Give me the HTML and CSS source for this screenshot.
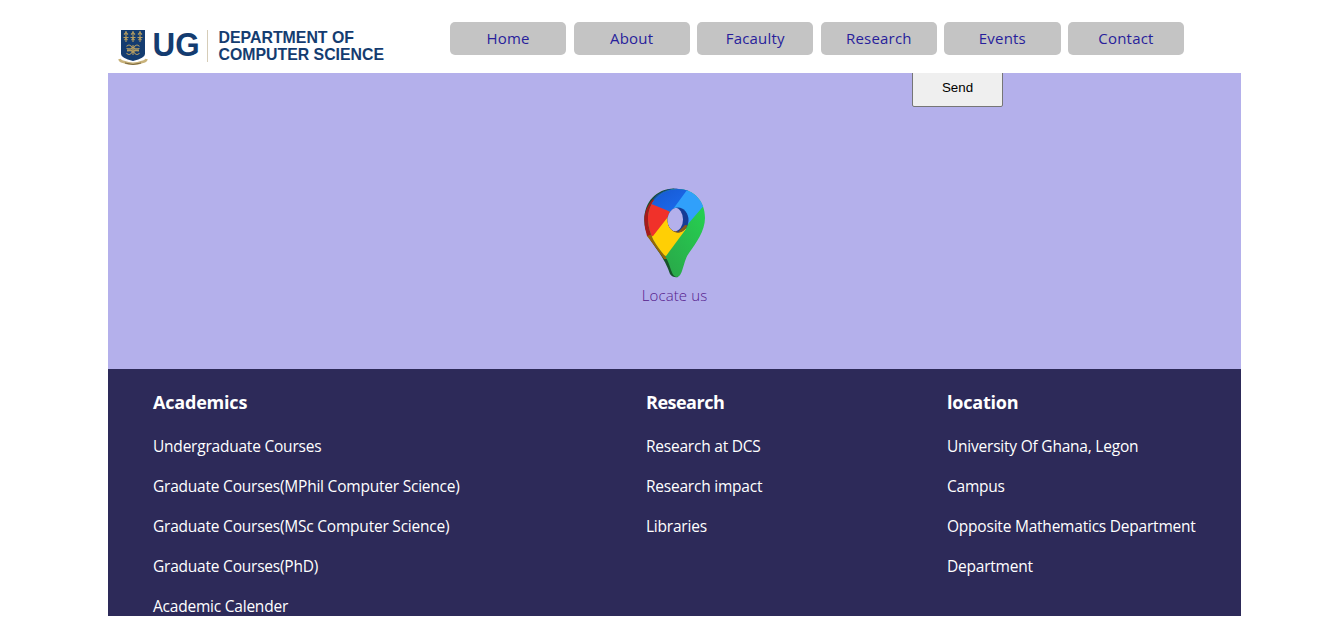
FILE: index.html
```html
<!DOCTYPE html>
<html lang="en">
<head>
<meta charset="utf-8">
<title>Department of Computer Science</title>
<link rel="stylesheet" href="styles.css">
</head>
<body>
<div class="page">
  <header class="header">
    <svg class="logo" width="284" height="44" viewBox="0 0 284 44" role="img">
      <path d="M13 7H37V31Q37 35 25 38Q13 35 13 31Z" fill="#143c70"/>
      <g stroke="#b59d61" stroke-width="1.1" fill="none">
        <path d="M18 8V19M25 8V19M32 8V19M15.500 14.500H20.500M22.500 14.500H27.500M29.500 14.500H34.500"/>
        <path d="M16 11.500L18 9.500L20 11.500M23 11.500L25 9.500L27 11.500M30 11.500L32 9.500L34 11.500M16.500 17L18 15.500L19.500 17M23.500 17L25 15.500L26.500 17M30.500 17L32 15.500L33.500 17"/>
        <path d="M18.500 23.500Q21 20.500 23.500 23.500T18.500 25.500M31.500 23.500Q29 20.500 26.500 23.500T31.500 25.500M18.500 30Q21 33 23.500 30T19 28M31.500 30Q29 33 26.500 30T31 28M25 22V32M19 27H31"/>
      </g>
      <path d="M11.500 36Q12 38.500 16 39Q25 42.500 34 39Q38 38.500 38.500 36" fill="none" stroke="#c8b27a" stroke-width="2.600"/>
      <path d="M17 40Q25 43 33 40" fill="none" stroke="#7a6840" stroke-width="1"/>
      <text class="logo-mark" x="44.500" y="32.500" textLength="47" lengthAdjust="spacingAndGlyphs">UG</text>
      <path d="M99.500 7V39" stroke="#d6cdb8" stroke-width="1"/>
      <text class="logo-name" x="110.500" y="19.800" textLength="135.500" lengthAdjust="spacingAndGlyphs">DEPARTMENT OF</text>
      <text class="logo-name" x="110.500" y="37" textLength="165.500" lengthAdjust="spacingAndGlyphs">COMPUTER SCIENCE</text>
    </svg>
    <nav class="nav">
      <a>Home</a><a>About</a><a>Facaulty</a><a>Research</a><a>Events</a><a>Contact</a>
    </nav>
  </header>
  <main class="contact">
    <button class="send">Send</button>
    <a class="locate">
      <svg class="pin" width="62" height="90" viewBox="0 0 62 90">
        <defs>
          <clipPath id="face"><path d="M34 1C50 1 61 13 61 30C61 43 52 55 45 65C39 73 39 89 33 89C27 89 27 77 21 68C12 57 5 48 4 32C4 13 17 1 34 1Z"/></clipPath>
          <clipPath id="hole"><ellipse cx="34" cy="32" rx="10.500" ry="12.500"/></clipPath>
          <linearGradient id="green" x1="1" y1="0" x2="0" y2="1"><stop offset="0" stop-color="#25d852"/><stop offset="1" stop-color="#2b9b47"/></linearGradient>
          <linearGradient id="blue" x1="0" y1="0" x2="1" y2="1"><stop offset="0" stop-color="#1757cf"/><stop offset="1" stop-color="#1c6df0"/></linearGradient>
        </defs>
        <path d="M30 .5C12 1 .3 14 .3 32C.3 46 8 54 14 63C21 73 24 80 26 86Q29 90 34 89L40 30L36 4Z" fill="#17522b"/>
        <path d="M.3 32C.3 23 4 17 9 11L16 14L11 51L3 48Q.3 40 .3 32Z" fill="#a51b1c"/>
        <path d="M3 48L11 45L27 71L20 71Q10 57 3 48Z" fill="#986508"/>
        <path d="M9 11Q17 1 32 .5L45 3L18 20Z" fill="#1647a5"/>
        <g clip-path="url(#face)">
          <path d="M0 0H62V90H0Z" fill="url(#green)"/>
          <path d="M0 60L9 47L27 24L42 41L22 68Z" fill="#ffcf05"/>
          <path d="M0 10H8L27 25L9 48L0 50Z" fill="#f0312a"/>
          <path d="M5 15L12 0H46L27 24Z" fill="url(#blue)"/>
          <path d="M43 2L62 0V15L44 36L37 28L27 24Z" fill="#30a0fb"/>
        </g>
        <g clip-path="url(#hole)">
          <path d="M23 18H46V45H23Z" fill="#163c96"/>
          <path d="M23 36L34 44L41 37L46 38V46H23Z" fill="#8a5716"/>
          <ellipse cx="31" cy="31.500" rx="8" ry="11.800" fill="#b4b0eb"/>
        </g>
      </svg>
      <span class="locate-label">Locate us</span>
    </a>
  </main>
  <footer class="footer">
    <section class="col col-academics">
      <h3 class="tall">Academics</h3>
      <p>Undergraduate Courses</p>
      <p>Graduate Courses(MPhil Computer Science)</p>
      <p>Graduate Courses(MSc Computer Science)</p>
      <p>Graduate Courses(PhD)</p>
      <p>Academic Calender</p>
    </section>
    <section class="col col-research">
      <h3>Research</h3>
      <p>Research at DCS</p>
      <p>Research impact</p>
      <p>Libraries</p>
    </section>
    <section class="col">
      <h3 class="tall">location</h3>
      <p>University Of Ghana, Legon</p>
      <p>Campus</p>
      <p>Opposite Mathematics Department</p>
      <p>Department</p>
    </section>
  </footer>
</div>
</body>
</html>
```
FILE: styles.css
```css
* { box-sizing: border-box; }
html, body { margin: 0; height: 618px; overflow: hidden; background: #fff; }
body { font-family: "Open Sans", "Noto Sans", sans-serif; font-size: 15.5px; }
.page { width: 1133px; height: 616px; margin-left: 108px; overflow: hidden; display: flex; flex-direction: column; }
.header { flex: 0 0 73px; display: flex; align-items: flex-start; background: #fff; }
.logo { display: block; margin-top: 23px; flex: none; }
.logo-mark { font: bold 34px "Liberation Sans", Arial, sans-serif; fill: #143c70; }
.logo-name { font: bold 16.5px "Liberation Sans", Arial, sans-serif; fill: #143c70; }
.nav { display: flex; gap: 7.4px; margin: 22px 0 0 58px; }
.nav a { width: 116.2px; height: 33px; border-radius: 5px; background: #c4c4c4; color: #281e9b; text-align: center; line-height: 33px; font-size: 15px; font-weight: 500; letter-spacing: .2px; }
.contact { flex: 0 0 296px; background: #b4b0eb; display: flex; flex-direction: column; }
.send { width: 91px; height: 41px; flex: none; margin: -7px 0 0 804px; border: 1px solid #767676; border-radius: 2px; background: #efefef; color: #000; font: 13.333px "Liberation Sans", Arial, sans-serif; clip-path: inset(7px 0 0 0); padding: 2px 0 0; }
.locate { align-self: center; display: flex; flex-direction: column; align-items: center; margin-top: 81px; color: #551a8b; }
.pin { display: block; }
.locate-label { font-size: 15px; line-height: 20px; margin-top: 7px; font-weight: 350; letter-spacing: .1px; }
.footer { flex: 1 0 247px; background: #2d2a59; color: #fff; display: flex; padding: 0 0 0 45px; overflow: hidden; }
.col { white-space: nowrap; }
.col-academics { width: 493px; }
.col-research { width: 301px; }
.col h3 { margin: 20px 0 0; font-size: 18px; line-height: 26px; font-weight: 700; letter-spacing: -.5px; }
.col h3.tall { letter-spacing: -.2px; }
.col p { margin: 0; line-height: 40px; letter-spacing: -.22px; }
.col h3 + p { margin-top: 11px; }
```
